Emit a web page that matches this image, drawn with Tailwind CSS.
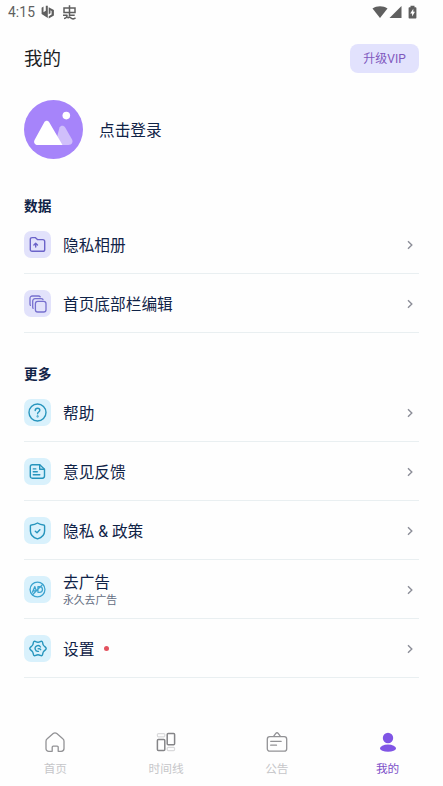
<!DOCTYPE html>
<html lang="zh-CN">
<head>
<meta charset="utf-8">
<meta name="viewport" content="width=device-width, initial-scale=1">
<title>我的</title>
<script src="https://cdn.jsdelivr.net/npm/@tailwindcss/browser@4"></script>
</head>
<body class="bg-white">
<svg class="hidden"><symbol id="chev" viewBox="0 0 8 10"><path d="M2 1.3 5.8 5 2 8.7" fill="none" stroke="#8c8e98" stroke-width="1.4"/></symbol></svg>
<div class="flex h-[786px] w-[443px] flex-col overflow-hidden bg-[#fefefe] font-['Roboto','Noto_Sans_CJK_SC',sans-serif] text-[#102347]">
  <!-- status bar -->
  <div class="flex h-6 shrink-0 items-center pl-2 pr-[26px] text-[#5f5f5f]">
    <span class="text-[13.8px] leading-6 tracking-[0.1px]">4:15</span>
    <svg class="ml-[6px]" width="14" height="14" viewBox="0 0 14 14" fill="currentColor"><path d="M.6 2.800 2.500 1.500v5.800l2.300-1.600V.7h2V13L.6 9z"/><path d="M7.700 2.200 12.900 5v5.600l-5.200 2.900v-2.200l2.900-1.700V5.900L9.500 5.300v3L7.700 9.300z"/></svg>
    <svg class="ml-[7px]" width="15" height="15" viewBox="0 0 15 15" fill="none" stroke="currentColor" stroke-width="1.5"><path d="M2 3h11v4.500H2zM7.500.3v11M1 10.200h3.800c.7 1.200-.6 3-2.800 3.200M7.500 10.200h5.200M5.500 13.300c1.500-2 3-.8 4 0 1.300.9 2.700.8 4-.6"/></svg>
    <div class="ml-auto flex items-center">
      <svg width="16" height="14" viewBox="0 0 16 14" fill="currentColor"><path d="M8 13 .5 3.4C4.8.4 11.2.4 15.5 3.4z"/></svg>
      <svg class="ml-px" width="13" height="14" viewBox="0 0 13 14" fill="currentColor"><path d="M12.5 1v12H.5z"/></svg>
      <svg class="ml-[6px]" width="9" height="14" viewBox="0 0 9 14"><path d="M2.5.8h4v1.400h1.200c.4 0 .7.300.7.700v9.800c0 .4-.3.700-.7.700H1.300c-.4 0-.7-.3-.7-.7V2.900c0-.4.300-.7.700-.7h1.200z" fill="currentColor"/><path d="M5.300 3.800 2.200 8.400h1.900v3l2.900-4.600H5.300z" fill="#fff"/></svg>
    </div>
  </div>

  <header class="flex h-[68px] shrink-0 items-center justify-between px-6">
    <h1 class="pt-0.5 text-[18.5px] leading-6 text-[#1d1d1f]">我的</h1>
    <button class="h-[29px] w-[69px] rounded-[8px] bg-[#e2e2fd] text-[12px] leading-[30px] text-[#8058bd]">升级VIP</button>
  </header>

  <section class="flex h-[75px] shrink-0 items-center px-6">
    <svg width="59" height="59" viewBox="0 0 59 59" class="shrink-0"><circle cx="29.5" cy="29.5" r="29.5" fill="#a684fa"/><circle cx="42.3" cy="15.6" r="3.8" fill="#fff"/><path d="M35.500 27.500c1.300-2.300 4.300-2.300 5.700 0l6.700 11.800c1.600 3-.2 5.700-3.400 5.700H31z" fill="#d0bffb"/><path d="M20.300 22.300c1.200-2 3.600-2 4.900 0L38.500 45H13.700c-3 0-4.500-2.800-3-5.300z" fill="#fff"/></svg>
    <span class="ml-4 pt-[3px] text-[15.7px] leading-6">点击登录</span>
  </section>

  <section class="mt-[28px] shrink-0 px-6">
    <h2 class="h-5 text-[13.7px] font-bold leading-[22px]">数据</h2>
    <div class="flex h-[59px] items-center border-b border-[#e9eff1] pt-px">
      <span class="flex size-[27px] items-center justify-center rounded-[7px] bg-[#e2e2fb]"><svg width="17" height="17" viewBox="0 0 17 17" fill="none" stroke="#6b63c9" stroke-width="1.400" stroke-linejoin="round" stroke-linecap="round"><path d="M1.3 3.4c0-1.100.8-1.800 1.800-1.800h3.100l2.200 2h5.400c1.100 0 1.900.8 1.900 1.800v8c0 1.100-.8 1.900-1.900 1.900H3.100c-1 0-1.800-.8-1.800-1.900z"/><path d="M6.7 11V7.400M4.900 9l1.800-1.800L8.500 9"/></svg></span>
      <span class="ml-3 pt-[3px] text-[15.7px] leading-6">隐私相册</span>
      <svg class="ml-auto mr-[5px]" width="8" height="10"><use href="#chev"/></svg>
    </div>
    <div class="flex h-[59px] items-center border-b border-[#e9eff1] pt-px">
      <span class="flex size-[27px] items-center justify-center rounded-[7px] bg-[#e2e2fb]"><svg width="18" height="18" viewBox="0 0 18 18" fill="none" stroke="#7770cf" stroke-width="1.300" stroke-linecap="round"><rect x="6.400" y="6.400" width="10.600" height="10.600" rx="2.300"/><path d="M4.100 13.300c-.3-.3-.4-.8-.4-1.300V6.100c0-1.500.9-2.400 2.400-2.400h6.100c.8 0 1.400.3 1.800.8M1.400 10.400C1.100 10 1 9.600 1 9.100V3.400C1 1.900 1.900 1 3.400 1h6.100c.7 0 1.300.3 1.700.7"/></svg></span>
      <span class="ml-3 pt-[3px] text-[15.7px] leading-6">首页底部栏编辑</span>
      <svg class="ml-auto mr-[5px]" width="8" height="10"><use href="#chev"/></svg>
    </div>
  </section>

  <section class="mt-[30px] shrink-0 px-6">
    <h2 class="h-5 text-[13.7px] font-bold leading-[22px]">更多</h2>
    <div class="flex h-[59px] items-center border-b border-[#e9eff1] pt-px">
      <span class="flex size-[27px] items-center justify-center rounded-[7px] bg-[#d9f1fc]"><svg width="19" height="19" viewBox="0 0 19 19" fill="none" stroke="#2795bd" stroke-width="1.400" stroke-linecap="round"><circle cx="9.500" cy="9.500" r="8.500"/><path d="M7.200 7.500c.1-1.400 1-2.200 2.300-2.200s2.300.8 2.300 2c0 1.800-2.200 1.700-2.200 3.500"/><circle cx="9.600" cy="13.400" r=".35"/></svg></span>
      <span class="ml-3 pt-[3px] text-[15.7px] leading-6">帮助</span>
      <svg class="ml-auto mr-[5px]" width="8" height="10"><use href="#chev"/></svg>
    </div>
    <div class="flex h-[59px] items-center border-b border-[#e9eff1] pt-px">
      <span class="flex size-[27px] items-center justify-center rounded-[7px] bg-[#d9f1fc]"><svg width="17" height="17" viewBox="0 0 17 17" fill="none" stroke="#2795bd" stroke-width="1.400" stroke-linecap="round" stroke-linejoin="round"><path d="M3.300 1.700h7.500l4.700 4.500v6.900c0 1.300-.8 2.100-2.100 2.100H3.300c-1.300 0-2-.8-2-2.100V3.800c0-1.300.7-2.100 2-2.100z"/><path d="M10.700 2v4.200h4.500M4.300 5.900h2.500M4.300 8.700h4M4.300 11.700h6.500"/></svg></span>
      <span class="ml-3 pt-[3px] text-[15.7px] leading-6">意见反馈</span>
      <svg class="ml-auto mr-[5px]" width="8" height="10"><use href="#chev"/></svg>
    </div>
    <div class="flex h-[59px] items-center border-b border-[#e9eff1] pt-px">
      <span class="flex size-[27px] items-center justify-center rounded-[7px] bg-[#d9f1fc]"><svg width="17" height="18" viewBox="0 0 17 18" fill="none" stroke="#2795bd" stroke-width="1.400" stroke-linecap="round" stroke-linejoin="round"><path d="M8.500 1c1.800 1.200 4 1.900 6.200 2 .6 0 .9.3.9.9v5c0 3.900-3 6.700-7.100 8-4.100-1.300-7.100-4.100-7.100-8v-5c0-.6.300-.9.900-.9C4.500 2.900 6.700 2.200 8.500 1z"/><path d="m6.300 9.200 1.700 1.500 2.900-3"/></svg></span>
      <span class="ml-3 pt-[3px] text-[15.7px] leading-6">隐私 &amp; 政策</span>
      <svg class="ml-auto mr-[5px]" width="8" height="10"><use href="#chev"/></svg>
    </div>
    <div class="flex h-[59px] items-center border-b border-[#e9eff1] pt-px">
      <span class="flex size-[27px] items-center justify-center rounded-[7px] bg-[#d9f1fc]"><svg width="17" height="17" viewBox="0 0 16 16" fill="none" stroke="#3ba3cf" stroke-width="1.200" stroke-linecap="round" stroke-linejoin="round"><circle cx="8" cy="8" r="7"/><path d="m3.200 10.500 2.300-5.200 1.400 4M4 9.300h2.300M8.400 5.300v5.300h1.500c3.700 0 3.700-5.300 0-5.300zM3.300 12.900 12.900 3.200"/></svg></span>
      <span class="ml-3 flex flex-col pt-1"><span class="text-[15.7px] leading-[19px]">去广告</span><span class="text-[10.8px] leading-[18px] text-[#636d82]">永久去广告</span></span>
      <svg class="ml-auto mr-[5px]" width="8" height="10"><use href="#chev"/></svg>
    </div>
    <div class="flex h-[59px] items-center border-b border-[#e9eff1] pt-px">
      <span class="flex size-[27px] items-center justify-center rounded-[7px] bg-[#d9f1fc]"><svg width="18" height="17" viewBox="0 0 18 17" fill="none" stroke="#2795bd" stroke-width="1.400" stroke-linecap="round" stroke-linejoin="round"><path d="M5.200 1.300c1.200-.4 1.700.9 3.800.9s2.600-1.300 3.800-.9c1.300.5.600 2.100 1.500 3.700s2.900 2 2.900 3.500-2 1.900-2.900 3.500-.2 3.200-1.500 3.700c-1.200.4-1.700-.9-3.800-.9s-2.600 1.300-3.800.9c-1.300-.5-.6-2.100-1.500-3.700S.8 10 .8 8.500s2-1.900 2.900-3.500.2-3.200 1.500-3.700z"/><path d="M11.500 7a2.900 2.900 0 1 0-2 4.300M11.700 9.700c-.6-.9-1.600-1.300-2.600-.9" stroke-width="1.300"/></svg></span>
      <span class="ml-3 pt-[3px] text-[15.7px] leading-6">设置</span>
      <span class="ml-[10px] size-[5px] rounded-full bg-[#e3535f]"></span>
      <svg class="ml-auto mr-[5px]" width="8" height="10"><use href="#chev"/></svg>
    </div>
  </section>

  <nav class="mt-auto grid h-[58px] shrink-0 grid-cols-4 text-[11.7px] leading-[18px] text-[#c6c6c9]">
    <div class="flex flex-col items-center pt-[3px]"><svg width="22" height="22" viewBox="0 0 22 22" fill="none" stroke="#929295" stroke-width="1.300" stroke-linejoin="round"><path d="M2 10.300c0-1 .3-1.800 1.200-2.500l6-5.200c1.200-1 2.400-1 3.600 0l6 5.200c.9.700 1.200 1.500 1.200 2.500v7.200c0 1.700-1.100 2.800-2.800 2.800h-3v-4c0-.7-.4-1.100-1.100-1.100H9.300c-.7 0-1.100.4-1.100 1.100v4H4.800c-1.700 0-2.800-1.100-2.800-2.800z"/></svg><span class="mt-[7px]">首页</span></div>
    <div class="flex flex-col items-center pt-[3px]"><svg width="20" height="22" viewBox="0 0 20 22" fill="none" stroke="#858588" stroke-width="1.500"><rect x="1.400" y="8.400" width="7.400" height="11.200" rx="1"/><rect x="11.200" y="2.600" width="7.400" height="11.200" rx="1"/><g stroke="#dadadc" stroke-width="1.200"><rect x="1.400" y="2.600" width="7.400" height="3.200" rx="1"/><rect x="11.200" y="16.400" width="7.400" height="3.200" rx="1"/></g></svg><span class="mt-[7px]">时间线</span></div>
    <div class="flex flex-col items-center pt-[3px]"><svg width="22" height="22" viewBox="0 0 22 22" fill="none" stroke="#929295" stroke-width="1.300" stroke-linecap="round" stroke-linejoin="round"><rect x="1.300" y="5.700" width="19.400" height="14.500" rx="2.500"/><path d="m7.600 5.300 2.200-2.900c.7-.9 1.700-.9 2.400 0l2.200 2.900M4.700 10.300h10.500M4.700 14.200h5.800"/></svg><span class="mt-[7px]">公告</span></div>
    <div class="flex flex-col items-center pt-[3px] text-[#7d50c9]"><svg width="20" height="22" viewBox="0 0 20 22" fill="#8055e5"><circle cx="10" cy="7" r="5.200"/><ellipse cx="10" cy="17.200" rx="8" ry="3.600"/></svg><span class="mt-[7px]">我的</span></div>
  </nav>
</div>
</body>
</html>
